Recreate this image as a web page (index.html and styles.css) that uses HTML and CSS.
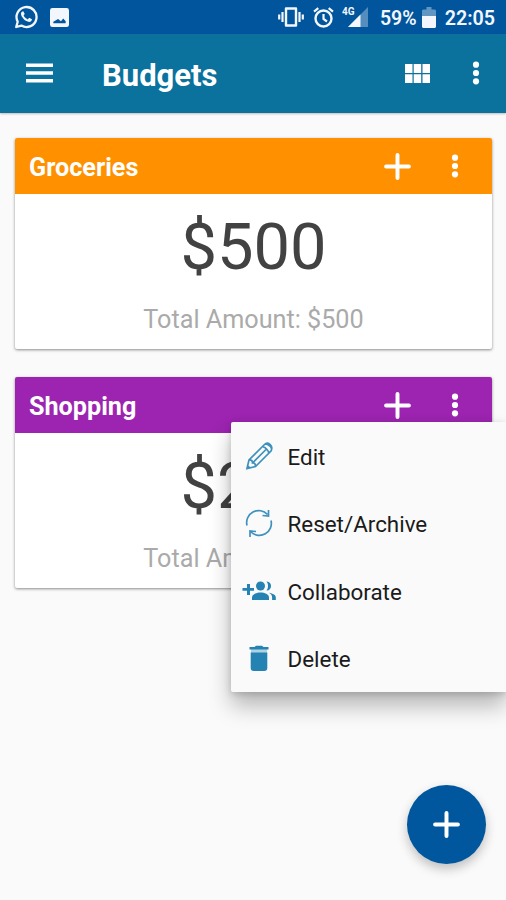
FILE: index.html
```html
<!DOCTYPE html>
<html lang="en">
<head>
<meta charset="utf-8">
<title>Budgets</title>
<link rel="stylesheet" href="styles.css">
</head>
<body>
<svg width="0" height="0" class="defs">
  <symbol id="plus" viewBox="0 0 26 26"><path d="M13 2v22M2 13h22" fill="none" stroke="currentColor" stroke-width="3.800" stroke-linecap="round"/></symbol>
  <symbol id="more" viewBox="0 0 8 26"><circle cx="4" cy="4.700" r="3.100"/><circle cx="4" cy="13" r="3.100"/><circle cx="4" cy="21.300" r="3.100"/></symbol>
</svg>
<div class="status">
  <svg class="whatsapp" viewBox="0 0 24 24"><path d="M2.200 22 3.700 16.700A10 10 0 1 1 7.400 20.600Z" fill="none" stroke="currentColor" stroke-width="2.300" stroke-linejoin="round"/><path d="M8.300 6.500c-1.600.9-1.700 2.900-.5 4.900 1.500 2.700 3.700 4.600 6.500 5.400 1.900.5 3.500-.6 3.700-2.500l-2.800-1.500-1.500 1.600c-1.900-.8-3.200-2.100-4.100-3.800l1.100-1.500-1.200-2.600Z"/></svg>
  <svg class="picture" viewBox="0 0 20 20"><path fill-rule="evenodd" d="M2.500 0h15A2.500 2.500 0 0 1 20 2.500v15a2.500 2.500 0 0 1-2.500 2.500h-15A2.500 2.500 0 0 1 0 17.500v-15A2.500 2.500 0 0 1 2.500 0ZM3.500 16h13v-2l-2.500-3-2.500 3-3-2.500-5 3Z"/></svg>
  <div class="status-right">
    <svg class="vibrate" viewBox="0 0 26 20"><path d="M8 1.500h10v17H8Z" fill="none" stroke="currentColor" stroke-width="2.400" stroke-linejoin="round"/><path d="M4.500 5v10M21.500 5v10M1.200 7.500v5M24.800 7.500v5" stroke="currentColor" stroke-width="2.200"/></svg>
    <svg class="alarm" viewBox="0 0 21 21"><circle cx="10.500" cy="11.500" r="8" fill="none" stroke="currentColor" stroke-width="2.400"/><path d="M10.500 7v5l3.500 2.500M1 4.700 5.300 1.200M20 4.700l-4.300-3.500" fill="none" stroke="currentColor" stroke-width="2.200"/></svg>
    <div class="signal"><span class="net">4G</span><svg class="bars" viewBox="0 0 20 20"><path opacity=".35" d="M20 0v20H0Z"/><path d="M12.500 7.500V20H0Z"/></svg></div>
    <span class="pct">59%</span>
    <svg class="battery" viewBox="0 0 14 21"><path opacity=".4" d="M1 2.500h3.500V0h5v2.500H13l1 1V9H0V3.500Z"/><path d="M0 9h14v11l-1 1H1l-1-1Z"/></svg>
    <span class="time">22:05</span>
  </div>
</div>
<header class="appbar">
  <svg class="burger" viewBox="0 0 27 20"><path d="M0 2.200h27M0 10h27M0 17.800h27" stroke="currentColor" stroke-width="3.600"/></svg>
  <h1>Budgets</h1>
  <svg class="grid" viewBox="0 0 25 19"><path d="M0 0h7.500v9H0ZM8.700 0h7.500v9H8.700ZM17.500 0H25v9h-7.500ZM0 10.200h7.500V19H0ZM8.700 10.200h7.500V19H8.700ZM17.500 10.200H25V19h-7.500Z"/></svg>
  <svg class="more"><use href="#more"/></svg>
</header>
<main>
  <section class="card">
    <div class="card-head orange"><h2>Groceries</h2><svg class="plus"><use href="#plus"/></svg><svg class="more"><use href="#more"/></svg></div>
    <div class="amount">$500</div>
    <div class="total">Total Amount: $500</div>
  </section>
  <section class="card">
    <div class="card-head purple"><h2>Shopping</h2><svg class="plus"><use href="#plus"/></svg><svg class="more"><use href="#more"/></svg></div>
    <div class="amount">$200</div>
    <div class="total">Total Amount: $200</div>
  </section>
</main>
<nav class="menu">
  <div class="item"><svg viewBox="0 0 34 34" class="line"><path d="M5 29.500 7 21 22.500 5.500Q25 3 28 5.500T29 12L13.500 27.500ZM7 21q3.500-.5 3.500 3 3-.5 3 3.500M20.500 7.500q5 1.500 6.500 7M10.500 24 24.500 10M24 4.500q4.500 2 6 6M5.500 27l2.500 2"/></svg><span>Edit</span></div>
  <div class="item"><svg viewBox="0 0 34 34" class="line"><path d="M5 19.500A12 12 0 0 1 25.500 8.500M29 14.500A12 12 0 0 1 9 26M26.500 4v6l-6-.5M8 31v-6l6 .5"/></svg><span>Reset/Archive</span></div>
  <div class="item"><svg viewBox="0 0 34 34"><path d="M5 10h3v4h4v2.800H8V21H5v-4.200H.500V14H5Z"/><circle cx="18.500" cy="12" r="4.500"/><path d="M10 26v-2.500c0-3.500 4.500-5 8.500-5s8.500 1.500 8.500 5V26ZM24.500 7.500c6-.5 6 9.500 0 9 2-2.500 2-6.500 0-9ZM27 18.800c4 .8 6.800 2 6.800 4.700V26h-3.700v-2.500c0-2-1-3.500-3.100-4.700Z"/></svg><span>Collaborate</span></div>
  <div class="item"><svg viewBox="0 0 34 34"><path opacity=".35" d="M9 8h16v4H9Z"/><path d="M7.500 6h5l1.500-1.200h6L21.500 6h5v2.500h-19ZM8.700 11.500h16.600V27a3 3 0 0 1-3 3H11.700a3 3 0 0 1-3-3Z"/></svg><span>Delete</span></div>
</nav>
<button class="fab" aria-label="Add budget"><svg class="plus"><use href="#plus"/></svg></button>
</body>
</html>
```
FILE: styles.css
```css
* { box-sizing: border-box; }
body {
  margin: 0;
  height: 900px;
  overflow: hidden;
  position: relative;
  background: #fafafa;
  font-family: Roboto, sans-serif;
}
svg { display: block; flex: none; fill: currentColor; }
.defs { position: absolute; }
h1, h2 { margin: 0; font-weight: 700; }
.status {
  height: 34px;
  padding: 0 11px 0 14px;
  display: flex;
  align-items: center;
  background: #00559d;
  color: #f3f7fd;
}
.whatsapp { width: 24px; height: 24px; }
.picture { width: 19px; height: 19px; margin-left: 12px; }
.status-right { margin-left: auto; display: flex; align-items: center; }
.vibrate { width: 26px; height: 20px; }
.alarm { width: 21px; height: 21px; margin-left: 9px; }
.signal { position: relative; width: 26px; height: 20px; margin-left: 8px; display: flex; justify-content: flex-end; }
.net { position: absolute; left: 0; top: 0; font-size: 10px; line-height: 10px; font-weight: 700; }
.bars { width: 20px; height: 20px; }
.pct { font-size: 19.500px; font-weight: 600; margin-left: 12px; line-height: 34px; padding-top: 3px; }
.battery { width: 14px; height: 21px; margin-left: 5px; }
.time { font-size: 19.700px; font-weight: 600; margin-left: 9px; line-height: 34px; padding-top: 3px; }
.appbar {
  position: relative;
  height: 79px;
  padding: 0 26px 1px;
  display: flex;
  align-items: center;
  background: #0b719d;
  color: #fff;
  box-shadow: 0 1px 2px rgba(0, 0, 0, .25);
}
.burger { width: 27px; height: 20px; }
.appbar h1 { margin-left: 49px; margin-right: auto; font-size: 31px; line-height: 40px; padding-top: 5px; }
.grid { width: 25px; height: 19px; margin-right: 42px; }
.more { width: 8px; height: 26px; }
main { padding: 25px 14px 0 15px; display: flex; flex-direction: column; gap: 28px; }
.card { height: 211px; background: #fff; border-radius: 2px; box-shadow: 0 1px 3px rgba(0, 0, 0, .45); text-align: center; }
.card-head { height: 56px; padding: 0 33px 0 14px; display: flex; align-items: center; color: #fff; border-radius: 2px 2px 0 0; }
.orange { background: #ff9000; }
.purple { background: #9c24b0; }
.card-head h2 { margin-right: auto; font-size: 25.200px; line-height: 34px; padding-top: 3px; }
.plus { width: 27px; height: 27px; }
.card-head .more { margin-left: 40px; }
.amount { font-size: 65px; line-height: 76px; padding-top: 15px; color: #424242; }
.total { font-size: 25.200px; line-height: 32px; margin-top: 19px; color: #aaa; }
.menu {
  position: absolute;
  left: 231px;
  top: 422px;
  width: 275px;
  height: 270px;
  background: #fafafa;
  border-radius: 2px 0 0 2px;
  box-shadow: 0 14px 22px rgba(0, 0, 0, .27), 0 2px 7px rgba(0, 0, 0, .16);
  color: #1b1b1b;
}
.item { height: 67.500px; padding-left: 11px; display: flex; align-items: center; font-size: 22.400px; }
.item svg { width: 34px; height: 34px; color: #2583b3; }
.item .line { fill: none; stroke: #3f91bd; stroke-width: 1.700; }
.item span { margin-left: 11.500px; padding-top: 1.500px; }
.fab {
  position: absolute;
  left: 407px;
  top: 785px;
  width: 79px;
  height: 79px;
  padding: 0;
  border: 0;
  border-radius: 50%;
  background: #00579d;
  color: #fff;
  display: grid;
  place-items: center;
  box-shadow: 0 5px 11px rgba(0, 0, 0, .24);
}
```
